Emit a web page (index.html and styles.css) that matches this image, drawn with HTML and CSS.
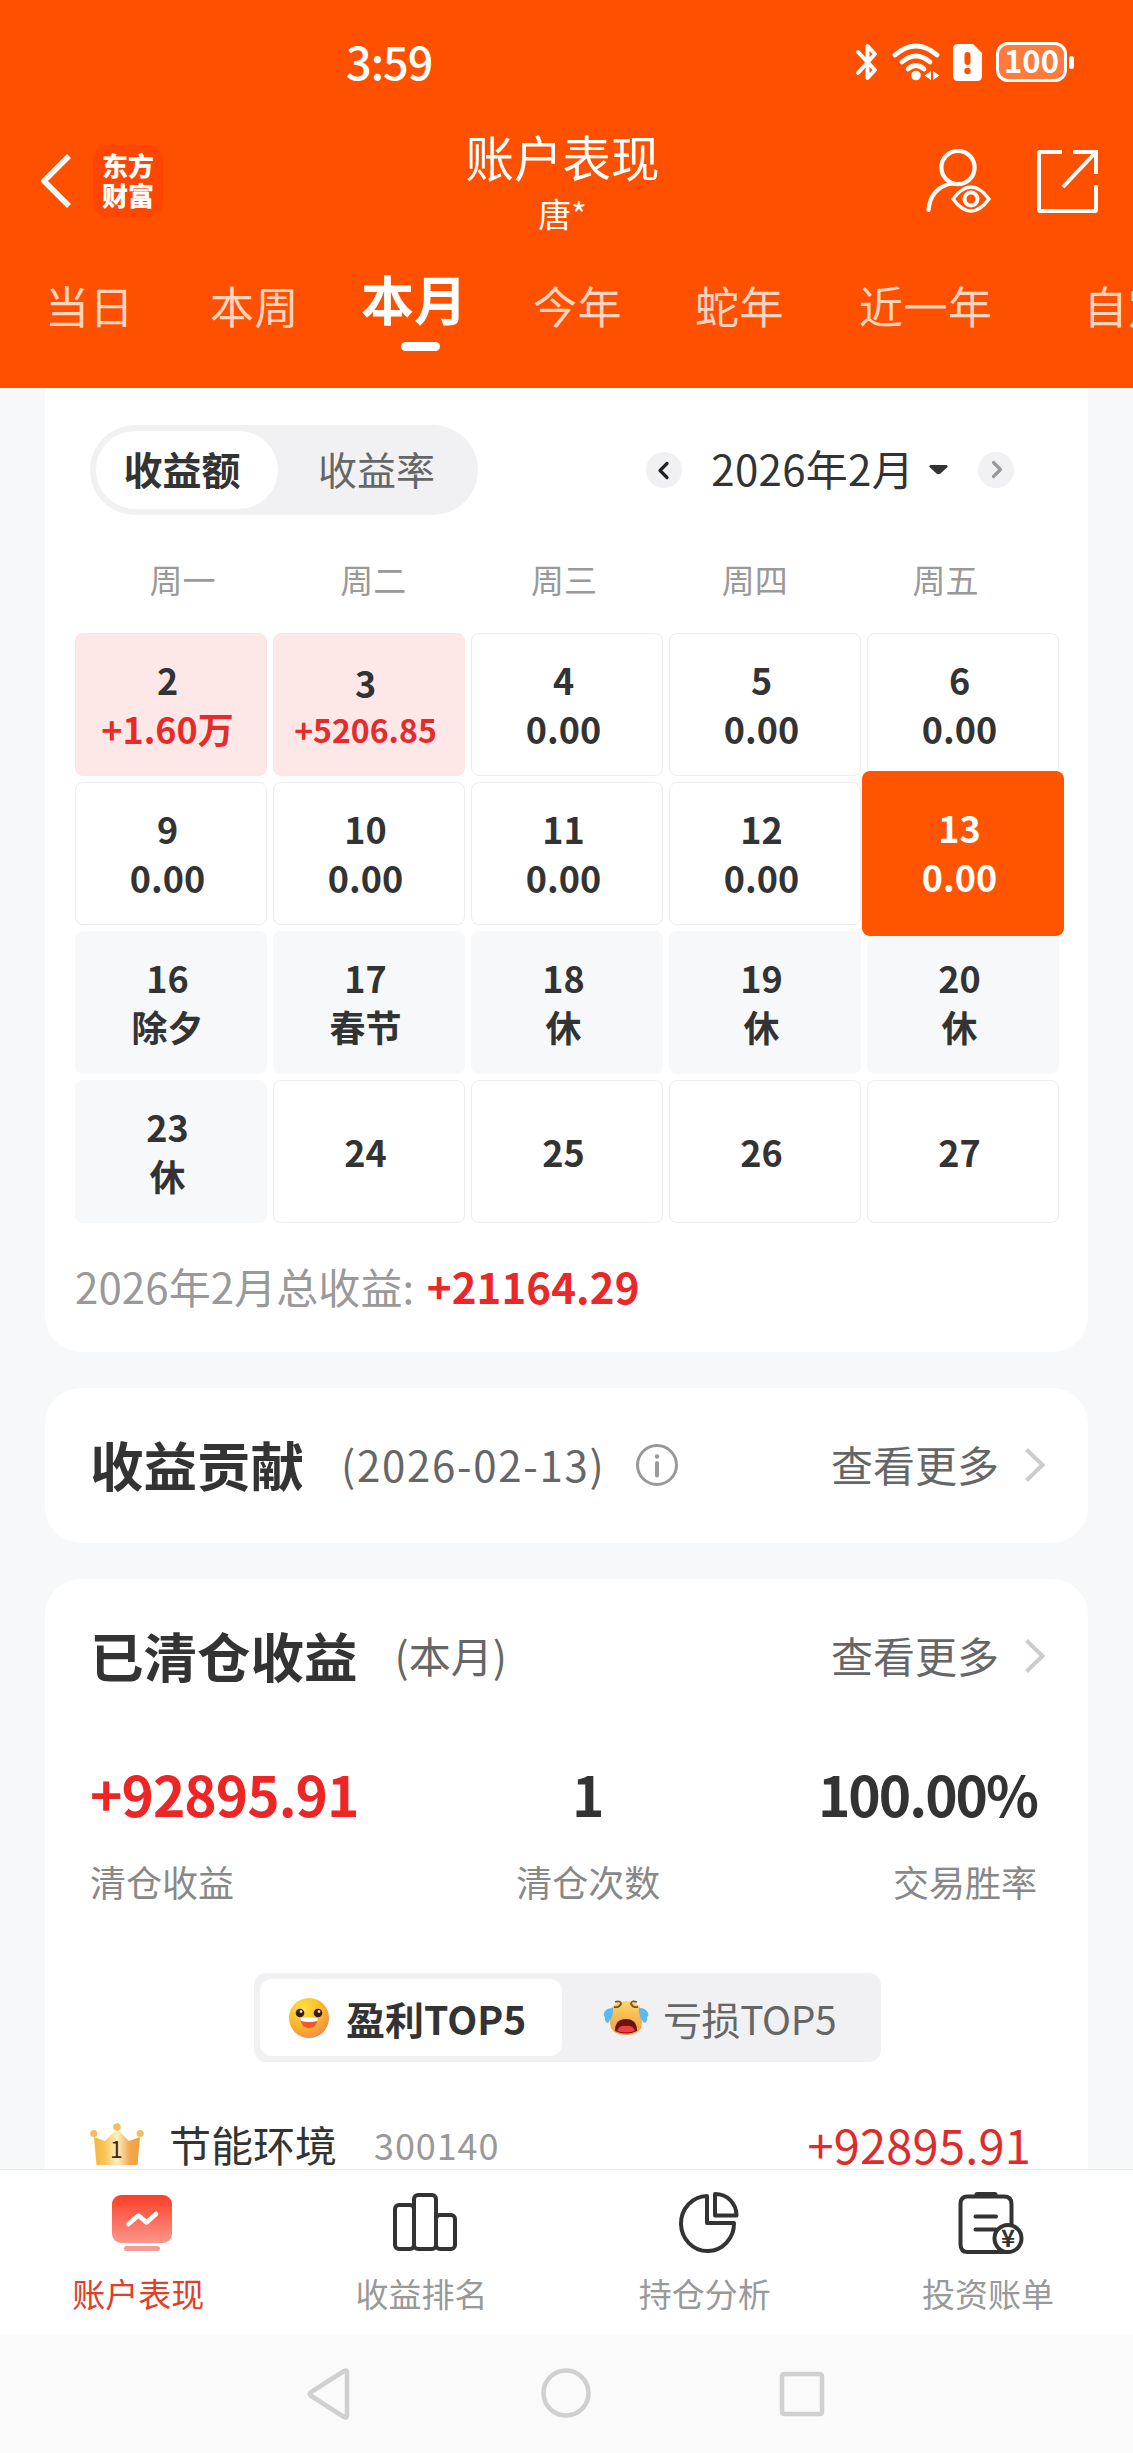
FILE: index.html
```html
<!DOCTYPE html>
<html lang="zh-CN">
<head>
    <meta charset="UTF-8" />
    <meta name="viewport" content="width=device-width, initial-scale=1.0" />
    <title>账户表现</title>
    <link rel="stylesheet" href="styles.css">
</head>
<body>
    <header class="header">
        <div class="status_bar">
            <span class="time">3:59</span>
            <div class="status_icons">
                <svg class="bluetooth" width="24" height="40" viewBox="0 0 24 40" fill="none" stroke="#fff" stroke-width="4" stroke-linecap="round" stroke-linejoin="round">
                    <path d="M3 10 L20 28 L12.500 36 V4 L20 12 L3 31" />
                </svg>
                <svg class="wifi" width="48" height="40" viewBox="0 0 48 40" fill="none" stroke="#fff" stroke-width="4.800" stroke-linecap="round">
                    <path d="M3 13 Q24 -5 45 13" />
                    <path d="M10 20 Q24 8 38 20" />
                    <path d="M16 27 Q24 20 32 27" />
                    <circle cx="24" cy="33.500" r="4.800" fill="#fff" stroke="none" />
                    <path d="M39 29 V38 L32.500 33.500 Z M41 29 V38 L47.500 33.500 Z" fill="#fff" stroke="none" />
                </svg>
                <svg class="sim" width="29" height="37" viewBox="0 0 29 37">
                    <path d="M5 0 H20 L29 9 V32 Q29 37 24 37 H5 Q0 37 0 32 V5 Q0 0 5 0 Z" fill="#fff" />
                    <rect x="11.500" y="8" width="6" height="13" rx="3" fill="#ff5000" />
                    <circle cx="14.500" cy="27" r="3.200" fill="#ff5000" />
                </svg>
                <div class="battery">100</div>
                <i class="battery_tip"></i>
            </div>
        </div>

        <div class="title_bar">
            <div class="title_left">
                <svg width="32" height="54" viewBox="0 0 32 54" fill="none" stroke="#fff" stroke-width="5.500">
                    <path d="M29 2 L4 27 L29 52" stroke-linejoin="round" />
                </svg>
                <div class="logo">东方<br>财富</div>
            </div>
            <div class="title_center">
                <h1>账户表现</h1>
                <p>唐*</p>
            </div>
            <div class="title_right">
                <svg width="66" height="64" viewBox="0 0 66 64" fill="none" stroke="#fff" stroke-width="4.200" stroke-linecap="round">
                    <circle cx="33" cy="18.500" r="16.600" />
                    <path d="M3.500 61 C4.500 47 13 36 28 34.500" />
                    <path d="M28 50 Q46 26 64 50 Q46 74 28 50 Z" stroke-width="3.500" stroke-linejoin="round" />
                    <circle cx="46" cy="50" r="6.500" stroke-width="4" />
                </svg>
                <svg width="62" height="64" viewBox="0 0 62 64" fill="none" stroke="#fff" stroke-width="4">
                    <path d="M26 3 H4 Q3 3 3 4 V61 Q3 62 4 62 H59 Q60 62 60 61 V36" />
                    <path d="M37 3 H60 V25 M60 3 L27 38" />
                </svg>
            </div>
        </div>

        <nav class="tabs">
            <a class="tab">当日</a>
            <a class="tab tab_week">本周</a>
            <a class="tab active">本月</a>
            <a class="tab tab_year">今年</a>
            <a class="tab tab_snake">蛇年</a>
            <a class="tab tab_recent">近一年</a>
            <a class="tab tab_custom">自定义</a>
        </nav>
    </header>

    <main class="content">
        <section class="card calendar_card">
            <div class="toolbar">
                <div class="pill">
                    <span class="on">收益额</span>
                    <span>收益率</span>
                </div>
                <div class="month_picker">
                    <span class="round_btn">
                        <svg width="36" height="36" viewBox="0 0 36 36" fill="none" stroke="#222" stroke-width="3.200" stroke-linecap="round" stroke-linejoin="round"><path d="M21 11.500 L14 18.500 L21 25.500" /></svg>
                    </span>
                    <span class="month">2026年2月</span>
                    <svg class="caret" width="19" height="10" viewBox="0 0 19 10"><path d="M1.500 0 H17.500 Q19.500 .8 18 2.500 L11.500 8.500 Q9.500 10 7.500 8.500 L1 2.500 Q-.5 .8 1.500 0 Z" fill="#333" /></svg>
                    <span class="round_btn">
                        <svg width="36" height="36" viewBox="0 0 36 36" fill="none" stroke="#999" stroke-width="3.200" stroke-linecap="round" stroke-linejoin="round"><path d="M15.500 10.500 L22.500 17.500 L15.500 24.500" /></svg>
                    </span>
                </div>
            </div>

            <div class="weekdays">
                <span>周一</span><span>周二</span><span>周三</span><span>周四</span><span>周五</span>
            </div>

            <div class="days">
                <div class="day profit"><b>2</b><b>+1.60万</b></div>
                <div class="day profit"><b>3</b><b class="small">+5206.85</b></div>
                <div class="day"><b>4</b><b>0.00</b></div>
                <div class="day"><b>5</b><b>0.00</b></div>
                <div class="day"><b>6</b><b>0.00</b></div>

                <div class="day"><b>9</b><b>0.00</b></div>
                <div class="day"><b>10</b><b>0.00</b></div>
                <div class="day"><b>11</b><b>0.00</b></div>
                <div class="day"><b>12</b><b>0.00</b></div>
                <div class="day selected"><b>13</b><b>0.00</b></div>

                <div class="day rest"><b>16</b><b>除夕</b></div>
                <div class="day rest"><b>17</b><b>春节</b></div>
                <div class="day rest"><b>18</b><b>休</b></div>
                <div class="day rest"><b>19</b><b>休</b></div>
                <div class="day rest"><b>20</b><b>休</b></div>

                <div class="day rest"><b>23</b><b>休</b></div>
                <div class="day"><b>24</b></div>
                <div class="day"><b>25</b></div>
                <div class="day"><b>26</b></div>
                <div class="day"><b>27</b></div>
            </div>

            <p class="total">2026年2月总收益: <b>+21164.29</b></p>
        </section>

        <section class="card">
            <div class="card_head">
                <h2>收益贡献</h2>
                <span class="sub date">(2026-02-13)</span>
                <svg class="info" width="42" height="42" viewBox="0 0 42 42" fill="none" stroke="#999" stroke-width="3">
                    <circle cx="21" cy="21" r="19.500" />
                    <path d="M21 19 V31.500" stroke-width="4" stroke-linecap="round" />
                    <circle cx="21" cy="12.500" r="2.200" fill="#999" stroke="none" />
                </svg>
                <a class="more">查看更多
                    <svg width="22" height="36" viewBox="0 0 22 36" fill="none" stroke="#ccc" stroke-width="4"><path d="M2.500 2.500 L18.500 18 L2.500 33.500" /></svg>
                </a>
            </div>
        </section>

        <section class="card cleared_card">
            <div class="card_head">
                <h2>已清仓收益</h2>
                <span class="sub">(本月)</span>
                <a class="more">查看更多
                    <svg width="22" height="36" viewBox="0 0 22 36" fill="none" stroke="#ccc" stroke-width="4"><path d="M2.500 2.500 L18.500 18 L2.500 33.500" /></svg>
                </a>
            </div>

            <div class="stats">
                <div class="stat first"><b>+92895.91</b><span>清仓收益</span></div>
                <div class="stat middle"><b>1</b><span>清仓次数</span></div>
                <div class="stat last"><b>100.00%</b><span>交易胜率</span></div>
            </div>

            <div class="top_switch">
                <span class="on">
                    <svg width="42" height="42" viewBox="0 0 42 42">
                        <defs>
                            <radialGradient id="face" cx=".35" cy=".25" r=".8">
                                <stop offset="0" stop-color="#ffe23f" />
                                <stop offset=".6" stop-color="#fbb52c" />
                                <stop offset="1" stop-color="#f08a4a" />
                            </radialGradient>
                        </defs>
                        <circle cx="21" cy="21" r="20" fill="url(#face)" />
                        <circle cx="12" cy="16" r="4.300" fill="#3b1d10" />
                        <circle cx="30" cy="16" r="4.300" fill="#3b1d10" />
                        <circle cx="13" cy="14.500" r="1.300" fill="#fff" />
                        <circle cx="31" cy="14.500" r="1.300" fill="#fff" />
                        <path d="M12 21 Q21 19 30 21 Q29 31 21 31 Q13 31 12 21 Z" fill="#f4572e" />
                        <path d="M12 21 Q21 19 30 21 L29.500 24 Q21 26 13 24 Z" fill="#fff" />
                    </svg>
                    盈利TOP5
                </span>
                <span class="off">
                    <svg width="46" height="38" viewBox="0 0 46 38">
                        <defs>
                            <linearGradient id="cry" x1="0" y1="0" x2="0" y2="1">
                                <stop offset="0" stop-color="#f7d768" />
                                <stop offset="1" stop-color="#f59a3c" />
                            </linearGradient>
                        </defs>
                        <path d="M9 8 Q14 2 23 2 Q32 2 37 8 Q41 18 38 29 Q34 36 23 36 Q12 36 8 29 Q5 18 9 8 Z" fill="url(#cry)" />
                        <path d="M12 32 Q12 20 23 20 Q34 20 34 32 Q23 37 12 32 Z" fill="#6e120e" />
                        <path d="M14 32 Q16 26 23 27 Q30 26 32 32 Q23 35 14 32 Z" fill="#e8433f" />
                        <path d="M12 3 Q18 1 18 5 Q16 9 11 8 M34 3 Q28 1 28 5 Q30 9 35 8" fill="none" stroke="#7b5326" stroke-width="1.800" />
                        <path d="M10 9 Q3 9 1 14 Q0 17 2 18 Q1 23 5 24 Q11 17 10 9 Z M36 9 Q43 9 45 14 Q46 17 44 18 Q45 23 41 24 Q35 17 36 9 Z" fill="#5bb8f0" />
                    </svg>
                    亏损TOP5
                </span>
            </div>

            <div class="stock">
                <svg class="crown" width="54" height="43" viewBox="0 0 54 43">
                    <defs>
                        <linearGradient id="gold" x1="0" y1="0" x2="1" y2="0">
                            <stop offset="0" stop-color="#f5b63c" />
                            <stop offset=".25" stop-color="#f9c65a" />
                            <stop offset=".5" stop-color="#fff0c0" />
                            <stop offset=".78" stop-color="#f4a650" />
                            <stop offset="1" stop-color="#f0a03e" />
                        </linearGradient>
                    </defs>
                    <path d="M4 14 L15 18 L27 6 L39 18 L50 14 L47.500 42 H6.500 Z" fill="url(#gold)" />
                    <circle cx="3.800" cy="10.500" r="3.600" fill="#f0c060" />
                    <circle cx="27" cy="4" r="3.800" fill="#f0c060" />
                    <circle cx="50.200" cy="10.500" r="3.600" fill="#f0c060" />
                    <text x="26.500" y="35" text-anchor="middle" class="rank">1</text>
                </svg>
                <span class="name">节能环境</span>
                <span class="code">300140</span>
                <span class="amount">+92895.91</span>
            </div>
        </section>
    </main>

    <nav class="bottom_nav">
        <a class="nav_item active">
            <svg width="64" height="64" viewBox="0 0 64 64">
                <defs>
                    <linearGradient id="red" x1="0" y1="0" x2="0" y2="1">
                        <stop offset="0" stop-color="#fd3e26" />
                        <stop offset="1" stop-color="#fd978b" />
                    </linearGradient>
                </defs>
                <rect x="2" y="5" width="60" height="48" rx="9" fill="url(#red)" />
                <rect x="14" y="56" width="36" height="5" rx="2.500" fill="#f59d93" />
                <path d="M18.500 34 L28.500 25.500 L36.500 32.500 L46 24" fill="none" stroke="#fff" stroke-width="4.500" stroke-linecap="round" stroke-linejoin="round" />
            </svg>
            <span>账户表现</span>
        </a>
        <a class="nav_item">
            <svg width="64" height="64" viewBox="0 0 64 64" fill="none" stroke="#333" stroke-width="4">
                <rect x="2" y="15" width="19" height="44" rx="4" />
                <rect x="21" y="5" width="22" height="54" rx="4" />
                <rect x="43" y="25" width="19" height="34" rx="4" />
            </svg>
            <span>收益排名</span>
        </a>
        <a class="nav_item">
            <svg width="64" height="64" viewBox="0 0 64 64" fill="none" stroke="#333" stroke-width="4" stroke-linejoin="round">
                <path d="M31 6 A26.500 27.500 0 1 0 58 33 H31 Z" />
                <path d="M39 4 V25.500 H60.500 C60.500 13 51 4 39 4 Z" />
            </svg>
            <span>持仓分析</span>
        </a>
        <a class="nav_item">
            <svg width="66" height="64" viewBox="0 0 66 64" fill="none" stroke="#333" stroke-width="4" stroke-linecap="round">
                <path d="M53.500 34 V14 Q53.500 6.500 46 6.500 H9.500 Q2.500 6.500 2.500 14 V54 Q2.500 62 9.500 62 H50" />
                <path d="M19 4.500 H37" stroke-width="5" />
                <path d="M17.500 26.500 H38 M17.500 39.500 H38" />
                <circle cx="50" cy="48.500" r="13.500" fill="#fff" />
                <text x="50" y="57" text-anchor="middle" class="yen">¥</text>
            </svg>
            <span>投资账单</span>
        </a>
    </nav>

    <footer class="system_nav">
        <svg width="48" height="52" viewBox="0 0 48 52" fill="none" stroke="#d0d0d0" stroke-width="4.500" stroke-linejoin="round"><path d="M5.500 24.500 Q4 26 5.500 27.500 L39 49 Q42 50.500 42 47.500 V4.500 Q42 1.500 39 3 Z" /></svg>
        <svg width="50" height="52" viewBox="0 0 50 52" fill="none" stroke="#d0d0d0" stroke-width="4.500"><circle cx="25" cy="25" r="22.500" /></svg>
        <svg width="46" height="52" viewBox="0 0 46 52" fill="none" stroke="#d0d0d0" stroke-width="4.500"><rect x="3" y="6" width="40" height="40" rx="2" /></svg>
    </footer>
</body>
</html>
```
FILE: styles.css
```css
* {
    margin: 0;
    padding: 0;
    box-sizing: border-box;
    font-family: "Noto Sans CJK SC", sans-serif;
}

body {
    width: 1133px;
    height: 2453px;
    display: flex;
    flex-direction: column;
    background: #f7f8fa;
    color: #333;
    overflow: hidden;
}

svg {
    display: block;
    flex: none;
}

/* Orange header */
.header {
    height: 388px;
    flex: none;
    background: #ff5000;
    color: #fff;
    overflow: hidden;
}

.status_bar {
    height: 124px;
    padding: 0 59px 0 346px;
    display: flex;
    justify-content: space-between;
    align-items: center;
}

.time {
    font-size: 45px;
    font-weight: 500;
    line-height: 60px;
    letter-spacing: -1px;
    margin-bottom: 3px;
}

.status_icons {
    display: flex;
    align-items: center;
}

.wifi {
    margin-left: 13px;
}

.sim {
    margin-left: 13px;
}

.battery {
    width: 71px;
    height: 40px;
    margin-left: 14px;
    border: 3px solid #fff;
    border-radius: 12px;
    background: #ff7a3d;
    font-size: 31px;
    font-weight: 700;
    line-height: 30px;
    text-align: center;
}

.battery_tip {
    width: 5px;
    height: 13px;
    margin-left: 2px;
    border-radius: 3px;
    background: #fff;
}

.title_bar {
    height: 113px;
    padding: 0 35px 0 40px;
    display: grid;
    grid-template-columns: 1fr auto 1fr;
    align-items: center;
}

.title_left,
.title_right {
    display: flex;
    align-items: center;
}

.title_left {
    gap: 21px;
}

.title_right {
    justify-content: flex-end;
    gap: 45px;
}

.logo {
    width: 70px;
    height: 72px;
    padding-top: 5px;
    border-radius: 15px;
    background: #ff4600;
    font-size: 26px;
    font-weight: 900;
    line-height: 30px;
    text-align: center;
}

.title_center {
    margin-right: 13px;
    text-align: center;
}

.title_center h1 {
    font-size: 48.5px;
    font-weight: 400;
    line-height: 56px;
}

.title_center p {
    margin-top: 9px;
    font-size: 33px;
    line-height: 40px;
}

.tabs {
    padding: 38px 0 0 45px;
    display: flex;
    white-space: nowrap;
}

.tab {
    flex: none;
    font-size: 44px;
    line-height: 60px;
    letter-spacing: .5px;
    color: #ffd3be;
}

.tab_week {
    margin-left: 76px;
}

.tab_year {
    margin-left: 66px;
}

.tab_snake {
    margin-left: 73px;
}

.tab_recent {
    margin-left: 75px;
}

.tab_custom {
    margin-left: 91px;
}

.tab.active {
    margin-left: 62px;
    font-size: 53px;
    font-weight: 700;
    line-height: 46px;
    letter-spacing: 0;
    color: #fff;
}

/* Current tab underline */
.tab.active::after {
    content: '';
    display: block;
    width: 39px;
    height: 9px;
    margin: 21px 0 0 40px;
    border-radius: 5px;
    background: #fff;
}

/* Cards */
.content {
    flex: 1;
    min-height: 0;
    padding: 0 45px;
    display: flex;
    flex-direction: column;
    gap: 36px;
    overflow: hidden;
}

.card {
    flex: none;
    background: #fff;
    border-radius: 36px;
}

.calendar_card {
    height: 964px;
    padding: 37px 29px 0 30px;
    border-radius: 0 0 36px 36px;
}

.toolbar {
    height: 90px;
    padding: 0 45px 0 15px;
    display: flex;
    justify-content: space-between;
    align-items: center;
}

.pill {
    width: 388px;
    height: 90px;
    padding: 6px;
    display: flex;
    border-radius: 45px;
    background: #f1f1f4;
}

.pill span {
    flex: 1;
    padding-left: 3px;
    font-size: 39px;
    line-height: 74px;
    text-align: center;
    color: #666;
}

.pill .on {
    flex: none;
    width: 182px;
    padding: 0 10px 0 0;
    border-radius: 39px;
    background: #fff;
    font-weight: 700;
    color: #333;
}

.month_picker {
    display: flex;
    align-items: center;
}

.round_btn {
    width: 36px;
    height: 36px;
    border-radius: 50%;
    background: #f1f1f4;
}

.month {
    margin: -4px 15px 0 29px;
    font-size: 42px;
    line-height: 60px;
    letter-spacing: .3px;
}

.caret {
    margin-right: 30px;
}

.weekdays {
    width: 954px;
    margin: 44px 0 0 12px;
    display: grid;
    grid-template-columns: repeat(5, 1fr);
    font-size: 33px;
    line-height: 40px;
    text-align: center;
    color: #999;
}

.days {
    margin-top: 34px;
    display: grid;
    grid-template-columns: repeat(5, 192px);
    grid-auto-rows: 143px;
    gap: 6px;
}

.day {
    padding: 0 7px 1px 0;
    display: flex;
    flex-direction: column;
    justify-content: center;
    border: 1px solid #ededef;
    border-radius: 8px;
    font-size: 36px;
    line-height: 49px;
    text-align: center;
}

.day.profit {
    border-color: #fbe6e5;
    background: #fde8e7;
}

.day.profit b + b {
    color: #e62b2b;
}

.day .small {
    font-size: 32px;
    line-height: 44px;
}

.day.rest {
    border-color: #f7f8fa;
    background: #f7f8fa;
}

/* Selected day grows past its cell */
.day.selected {
    margin: -11px -5px;
    padding-bottom: 3px;
    border: none;
    background: #ff5500;
    color: #fff;
    z-index: 1;
}

.total {
    margin-top: 33px;
    font-size: 42px;
    line-height: 60px;
    letter-spacing: .1px;
    color: #999;
}

.total b {
    margin-left: 3px;
    color: #ea2828;
}

.card_head {
    height: 155px;
    padding: 0 42px 5px 45px;
    display: flex;
    align-items: center;
}

.card_head h2 {
    font-size: 53.5px;
    font-weight: 700;
}

.sub {
    margin-left: 37px;
    font-size: 42px;
    color: #666;
}

.sub.date {
    letter-spacing: 1.7px;
}

.info {
    margin: 4px 0 0 31px;
}

.more {
    margin-left: auto;
    display: flex;
    align-items: center;
    gap: 25px;
    font-size: 42px;
    color: #666;
}

.more svg {
    margin-top: 4px;
}

.stats {
    padding: 24px 51px 0 45px;
    display: flex;
    justify-content: space-between;
}

.stat b {
    display: block;
    font-size: 55px;
    line-height: 70px;
}

.stat span {
    display: block;
    margin-top: 31px;
    font-size: 36px;
    line-height: 44px;
    color: #888;
}

.stat.first b {
    letter-spacing: -1px;
    color: #ee2525;
}

.stat.middle {
    text-align: center;
}

.stat.last {
    text-align: right;
}

.stat.last b {
    letter-spacing: -2px;
}

.cleared_card {
    padding-bottom: 60px;
}

.top_switch {
    width: 627px;
    height: 89px;
    margin: 70px 207px 0 209px;
    padding: 6px;
    display: flex;
    border-radius: 12px;
    background: #f1f1f4;
    font-size: 39px;
    line-height: 74px;
}

.top_switch span {
    display: flex;
    align-items: center;
    gap: 16px;
}

.top_switch .on {
    width: 302px;
    padding-left: 28px;
    border-radius: 12px;
    background: #fff;
    font-weight: 700;
}

.top_switch .off {
    padding-left: 41px;
    gap: 14px;
    letter-spacing: -.4px;
    color: #666;
}

.stock {
    margin-top: 52px;
    padding: 0 57px 0 45px;
    display: flex;
    align-items: center;
    line-height: 60px;
}

.rank {
    font-size: 23px;
    fill: #4a2410;
}

.name {
    margin-left: 25px;
    font-size: 42px;
}

.code {
    margin-left: 37px;
    font-size: 36px;
    letter-spacing: .9px;
    color: #999;
}

.amount {
    margin-left: auto;
    font-size: 47px;
    letter-spacing: .2px;
    color: #de2c2c;
}

/* Bottom navigation */
.bottom_nav {
    height: 165px;
    flex: none;
    display: grid;
    grid-template-columns: repeat(4, 1fr);
    border-top: 1px solid #e9e9eb;
    background: #fff;
}

.nav_item {
    padding-top: 20px;
    display: flex;
    flex-direction: column;
    align-items: center;
}

.nav_item span {
    margin: 19px 7px 0 0;
    font-size: 33px;
    line-height: 40px;
    color: #999;
}

.nav_item.active span {
    color: #e23e28;
}

.yen {
    font-size: 24px;
    font-weight: 700;
    stroke: none;
    fill: #333;
}

.system_nav {
    height: 119px;
    flex: none;
    padding: 0 308px 0 305px;
    display: flex;
    justify-content: space-between;
    align-items: center;
    background: #fafafa;
}
```
